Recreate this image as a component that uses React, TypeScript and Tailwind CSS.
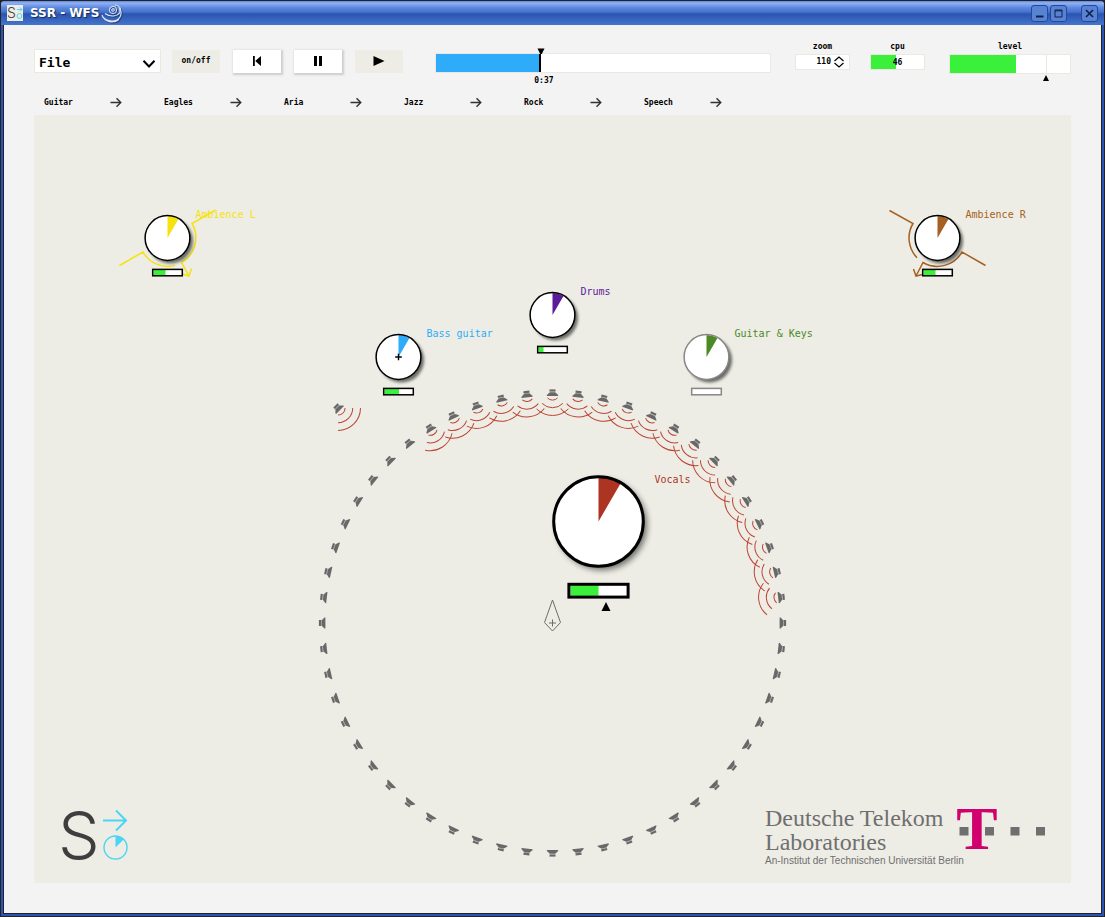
import React from "react";

type Source = {
  name: string;
  x: number;
  y: number;
  scale: number;
  color: string;
  level: number;
  muted?: boolean;
  fixed?: boolean;
  wavefront?: string[];
};

// Positions are relative to the listener in the middle of the array.
const sources: Source[] = [
  {
    name: "Ambience L",
    x: -385,
    y: -385,
    scale: 1,
    color: "#f5e311",
    level: 12,
    wavefront: [
      "M48 -28 L24.5 -14.5 A28.4 28.4 0 0 1 14 24.5 L21.5 38",
      "M-48 27.5 L-24.5 14 A28.4 28.4 0 0 0 7.5 27.4",
      "M24 30.5 L21.5 38 L15 36",
    ],
  },
  {
    name: "Ambience R",
    x: 385,
    y: -385,
    scale: 1,
    color: "#a66122",
    level: 12,
    wavefront: [
      "M-48 -27.5 L-24.5 -14.5 A28.4 28.4 0 0 0 -20.5 19.7",
      "M48 27.5 L24.5 14 A28.4 28.4 0 0 1 -14.5 24.5 L-21.5 38",
      "M-24 31 L-21.5 38 L-15 36.5",
    ],
  },
  { name: "Drums", x: 0, y: -308, scale: 1, color: "#5d1a9b", level: 5 },
  { name: "Bass guitar", x: -154, y: -266, scale: 1, color: "#2eacf9", level: 14.5, fixed: true },
  { name: "Guitar & Keys", x: 154, y: -266, scale: 1, color: "#4c8a25", level: 0, muted: true },
  { name: "Vocals", x: 46, y: -101.5, scale: 2, color: "#ad3422", level: 14 },
];

const SPEAKERS = 56;
const RADIUS = 230;
const speakers = Array.from({ length: SPEAKERS }, (_, i) => {
  const k = i > SPEAKERS / 2 ? i - SPEAKERS : i;
  const angle = (k * 360) / SPEAKERS;
  const rad = (angle * Math.PI) / 180;
  return {
    x: RADIUS * Math.sin(rad),
    y: -RADIUS * Math.cos(rad),
    angle,
    active: k >= -5 && k <= 13,
  };
}).concat({ x: -214.5, y: -215, angle: -45, active: true });

const presets = ["Guitar", "Eagles", "Aria", "Jazz", "Rock", "Speech"];

function Speaker({ x, y, angle, active }: { x: number; y: number; angle: number; active: boolean }) {
  return (
    <g transform={`translate(${x} ${y}) rotate(${angle})`}>
      <path d="M-3 -3.6 H3 V-1.4 H-3 Z" fill="#686868" />
      <path d="M-2.6 -1.4 H2.6 V-0.8 H-2.6 Z" fill="#9a9a9a" />
      <path d="M-2.7 -0.8 H2.7 L5.6 1.9 V2.9 H-5.6 V1.9 Z" fill="#686868" />
      {active && (
        <path
          d="M-5 5 A7 7 0 0 0 5 5 M-10.4 10.4 A14.7 14.7 0 0 0 10.4 10.4 M-15.9 15.9 A22.5 22.5 0 0 0 15.9 15.9"
          fill="none"
          stroke="#bd4433"
          strokeWidth="1"
        />
      )}
    </g>
  );
}

function SourceNode({ s }: { s: Source }) {
  const edge = s.muted ? "#878787" : "#000";
  return (
    <g transform={`translate(${s.x} ${s.y})`}>
      {s.wavefront?.map((d) => (
        <path key={d} d={d} fill="none" stroke={s.color} strokeWidth="1.5" />
      ))}
      <g transform={`scale(${s.scale})`}>
        <circle r="22.5" cx={s.scale > 1 ? 1.7 : 3} cy={s.scale > 1 ? 1.7 : 3} fill="#000" opacity="0.55" filter="url(#soft)" />
        <circle r="22.4" fill="#fff" />
        <path d="M0 0 V-22 A22 22 0 0 1 11 -19.05 Z" fill={s.color} />
        <circle r="22.4" fill="none" stroke={edge} strokeWidth="1.5" />
        {s.fixed && <path d="M-3.3 0 H3.3 M0 -3.3 V3.3" stroke="#000" strokeWidth="1.4" />}
        <rect x="-14.8" y="31.4" width="29.6" height="6.4" fill="#fff" />
        <rect x="-14" y="32" width={s.level} height="5.2" fill="#3bf03b" />
        <rect x="-14.8" y="31.4" width="29.6" height="6.4" fill="none" stroke={edge} strokeWidth="1.5" />
      </g>
      {s.scale > 1 && <path d="M7.5 80.5 L12 89.5 H3 Z" fill="#000" />}
      <text
        x={s.scale > 1 ? 56 : 28}
        y={s.scale > 1 ? -39 : -20}
        fill={s.color}
        className="font-['DejaVu_Sans_Mono',monospace] text-[10px]"
      >
        {s.name}
      </text>
    </g>
  );
}

function Scene() {
  return (
    <svg viewBox="-518.5 -508 1037 768" className="block h-auto w-full bg-[#edede5] font-normal" role="img" aria-label="Scene">
      <defs>
        <filter id="soft" x="-30%" y="-30%" width="160%" height="160%">
          <feGaussianBlur stdDeviation="1.7" />
        </filter>
      </defs>
      {speakers.map((s, i) => (
        <Speaker key={i} {...s} />
      ))}
      <g fill="none" stroke="#6c6c6c" strokeWidth="1">
        <path d="M0 -23 L8 -0.5 L0 8 L-8 -0.5 Z M-3.5 0 H3.5 M0 -3.5 V3.5" />
      </g>
      {sources.map((s) => (
        <SourceNode key={s.name} s={s} />
      ))}

      <g transform="translate(-473.5 212.5)">
        <text x="-21" y="23" fill="#3e3e3e" className="font-[Inter,sans-serif] text-[66px] font-light">
          S
        </text>
        <g fill="none" stroke="#4bd5f2">
          <path d="M24 -15 H47 M37 -25 L47 -15 L37 -5" strokeWidth="2" />
          <circle cx="36.5" cy="12" r="11.5" strokeWidth="1.4" />
        </g>
        <path d="M36.5 12 V0.5 A11.5 11.5 0 0 1 44.6 3.9 Z" fill="#4bd5f2" />
      </g>

      <g transform="translate(212.5 184)" fill="#6f6f70">
        <text y="19" className="font-['Liberation_Serif',serif] text-[24px]">
          Deutsche Telekom
        </text>
        <text y="43" className="font-['Liberation_Serif',serif] text-[24px]">
          Laboratories
        </text>
        <text y="57" className="font-['Liberation_Sans_Narrow','Liberation_Sans',sans-serif] text-[10px]">
          An-Institut der Technischen Universität Berlin
        </text>
        <rect x="194.5" y="20" width="9" height="8.5" />
        <rect x="220" y="20" width="9" height="8.5" />
        <rect x="245.5" y="20" width="9" height="8.5" />
        <rect x="271" y="20" width="9" height="8.5" />
        <text x="212" y="42" textAnchor="middle" fill="#d0006f" className="font-['Liberation_Serif',serif] text-[62px] font-bold">
          T
        </text>
      </g>
    </svg>
  );
}

function TitleBar() {
  const button =
    "flex size-[17px] items-center justify-center rounded-[3px] border border-[#2448a0] bg-[#5783d2]";
  return (
    <header className="flex h-6 items-center rounded-t-[3px] bg-[linear-gradient(to_bottom,#5d88dc_0px,#8fb2f4_2px,#5b86dd_7px,#4573cd_11px,#2a54b0_13px,#4575cc_24px)] pr-1.5 pl-1.5">
      <svg viewBox="0 0 16 16" className="size-4 bg-[#edede5]" aria-hidden="true">
        <text x="0" y="13" fill="#444" className="font-[Inter,sans-serif] text-[14px] font-light">
          S
        </text>
        <path d="M10 4.5 H15 M13 2.5 L15 4.5 L13 6.5" fill="none" stroke="#4bd5f2" />
        <circle cx="12.5" cy="11" r="2.4" fill="none" stroke="#4bd5f2" />
      </svg>
      <h1 className="ml-[7px] font-['DejaVu_Sans',sans-serif] text-[12px] leading-4 font-bold whitespace-nowrap text-white [text-shadow:1px_1px_1px_#14295c]">
        SSR - WFS
      </h1>
      <svg viewBox="0 0 22 22" className="ml-0.5 size-[22px] drop-shadow-[1px_1px_0_#23407c]" fill="none" stroke="#dce4f4" aria-hidden="true">
        <circle cx="12" cy="8" r="1.3" />
        <circle cx="12" cy="8" r="3.6" />
        <path d="M4 11.5 C9 15.5 16 14.5 19 10.5 C19.5 5 17 3 14 3" strokeWidth="1.1" />
        <path d="M1 13 C3 18 10 20.5 16 18 C20 15.5 21 11 19 5.5 M1 13.5 C4 20 12 22 18 17.5" strokeWidth="1.1" />
      </svg>
      <div className="ml-auto flex items-center gap-0.5">
        <button aria-label="Minimize" className={button}>
          <svg viewBox="0 0 11 11" className="size-[11px]" stroke="#10204c" strokeWidth="2">
            <path d="M2 8.5 H9.5" />
          </svg>
        </button>
        <button aria-label="Maximize" className={button}>
          <svg viewBox="0 0 11 11" className="size-[11px]" fill="none" stroke="#10204c">
            <path d="M2 2 H9 V9 H2 Z M2 2.8 H9" />
          </svg>
        </button>
        <button aria-label="Close" className={`${button} ml-3`}>
          <svg viewBox="0 0 11 11" className="size-[11px]" fill="none" stroke="#10204c" strokeWidth="1.7">
            <path d="M2 2 L9 9 M9 2 L2 9" />
          </svg>
        </button>
      </div>
    </header>
  );
}

export default function App() {
  const raised = "flex h-[23px] w-12 items-center justify-center bg-white shadow-[1px_1px_2px_1px_#cccccc]";
  const flat = "flex h-[23px] w-12 items-center justify-center bg-[#edede5]";
  return (
    <div className="flex min-h-screen flex-col bg-[#242226] p-px font-['DejaVu_Sans_Mono',monospace] text-[8px] leading-[10px] font-bold text-black">
      <TitleBar />
      <div className="flex flex-1 flex-col border-x-2 border-b-2 border-[#2a55b4]">
        <main className="flex-1 border-x border-b border-[#242226] bg-[#f3f3f3] px-[30px] pt-4 pb-[30px]">
          <div className="flex h-[50px] items-start">
            <div className="mt-2 flex items-center gap-[13px]">
              <div className="relative -mr-0.5">
                <select
                  aria-label="File"
                  className="h-6 w-[127px] appearance-none border border-[#e9e9e0] bg-white pt-1 pl-1 text-[13px] leading-[18px] font-bold"
                >
                  <option>File</option>
                </select>
                <svg viewBox="0 0 12 8" className="pointer-events-none absolute top-[11px] right-[6px] h-2 w-3" fill="none" stroke="#000" strokeWidth="2">
                  <path d="M0.5 0.8 L6 6.5 L11.5 0.8" />
                </svg>
              </div>
              <button className={flat}>on/off</button>
              <button aria-label="Skip to start" className={raised}>
                <svg viewBox="0 0 10 10" className="size-2.5">
                  <path d="M1 0 H2.8 V10 H1 Z M9 0 V10 L3.2 5 Z" />
                </svg>
              </button>
              <button aria-label="Pause" className={raised}>
                <svg viewBox="0 0 10 10" className="size-2.5">
                  <path d="M1 0 H4 V10 H1 Z M6 0 H9 V10 H6 Z" />
                </svg>
              </button>
              <button aria-label="Play" className={flat}>
                <svg viewBox="0 0 12 12" className="size-3">
                  <path d="M0.5 1 L11.5 6 L0.5 11 Z" />
                </svg>
              </button>
            </div>

            <div
              role="progressbar"
              aria-label="Position"
              aria-valuenow={31}
              className="relative mt-3 ml-8 h-5 flex-1 border border-[#e9e9e0] bg-white"
            >
              <div className="h-full w-[31.5%] border-r-2 border-black bg-[#2eacf9]" />
              <div className="absolute -top-1.5 left-[31.3%] flex -translate-x-1/2 flex-col items-center">
                <svg viewBox="0 0 8 6" className="h-1.5 w-2">
                  <path d="M0.5 0.5 H7.5 L4.8 6 H3.2 Z" />
                </svg>
              </div>
              <span className="absolute top-[22px] left-[32.3%] -translate-x-1/2">0:37</span>
            </div>

            <div className="ml-6 flex w-[55px] flex-col items-center gap-0.5 pt-px">
              <label htmlFor="zoom">zoom</label>
              <div className="flex h-4 w-full items-center justify-end gap-0.5 border border-[#e9e9e0] bg-white pr-1">
                <input id="zoom" defaultValue="110" className="h-3 w-6 bg-transparent pb-0.5 text-right outline-none" />
                <div className="flex flex-col">
                  <button aria-label="Zoom in" className="h-1.5 w-3">
                    <svg viewBox="0 0 12 6" className="h-1.5 w-3" fill="none" stroke="#000" strokeWidth="1.2">
                      <path d="M1.5 5 L6 1 L10.5 5" />
                    </svg>
                  </button>
                  <button aria-label="Zoom out" className="h-1.5 w-3">
                    <svg viewBox="0 0 12 6" className="h-1.5 w-3" fill="none" stroke="#000" strokeWidth="1.2">
                      <path d="M1.5 1 L6 5 L10.5 1" />
                    </svg>
                  </button>
                </div>
              </div>
            </div>

            <div className="ml-5 flex w-[55px] flex-col items-center gap-0.5 pt-px">
              <span>cpu</span>
              <div className="relative flex h-4 w-full items-center justify-center border border-[#e9e9e0] bg-white pt-0.5">
                <div className="absolute inset-y-0 left-0 w-[47%] bg-[#3bf03b]" />
                <span className="relative">46</span>
              </div>
            </div>

            <div className="ml-6 flex w-[122px] flex-col items-center gap-0.5 pt-px">
              <span>level</span>
              <div className="relative h-5 w-full border border-[#e9e9e0] bg-white">
                <div className="h-full w-[55%] bg-[#3bf03b]" />
                <div className="absolute inset-y-0 left-[80%] w-px bg-[#e9e9e0]" />
                <svg viewBox="0 0 6 6" className="absolute top-5 left-[80%] size-1.5 -translate-x-1/2">
                  <path d="M3 0 L6 6 H0 Z" />
                </svg>
              </div>
            </div>
          </div>

          <nav className="flex h-6">
            {presets.map((name) => (
              <button key={name} className="flex w-[120px] items-center pb-0.5 pl-2.5 text-left">
                <span className="w-[66px] pt-0.5">{name}</span>
                <svg viewBox="0 0 12 11" className="h-[11px] w-3" fill="none" stroke="#333" strokeWidth="1.4">
                  <path d="M0.5 5.5 H10.5 M6.5 1.2 L10.8 5.5 L6.5 9.8" />
                </svg>
              </button>
            ))}
          </nav>

          <Scene />
        </main>
      </div>
    </div>
  );
}
